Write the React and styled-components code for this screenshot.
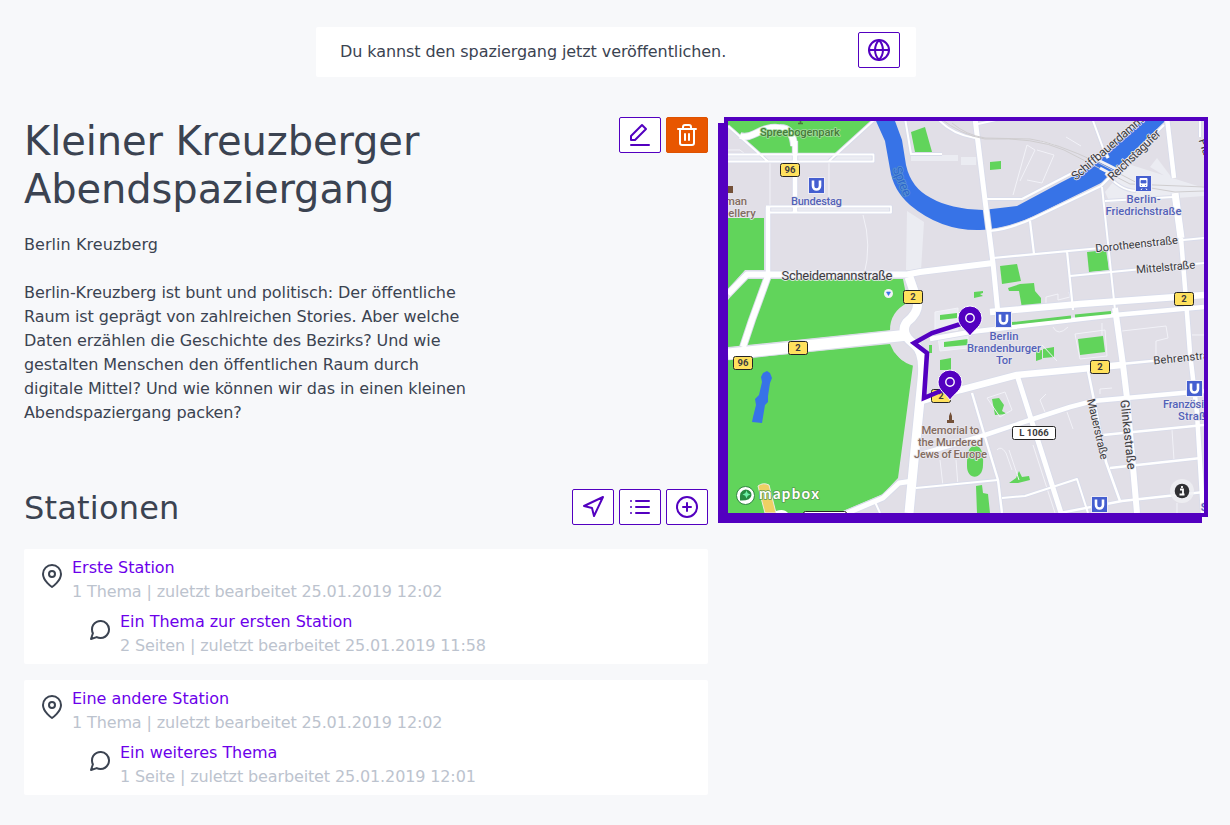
import React from "react";
import styled, { createGlobalStyle } from "styled-components";

const purple = "#5300c0";

const GlobalStyle = createGlobalStyle`
  *, *::before, *::after { box-sizing: border-box; }
  body {
    margin: 0;
    background: #f7f8fa;
    color: #3b4351;
    font-family: "DejaVu Sans", sans-serif;
    font-size: 16px;
    line-height: 24px;
  }
  h1, h2, p, ul { margin: 0; padding: 0; font-weight: 400; }
  ul { list-style: none; }
`;

const Page = styled.main`
  width: 1184px;
  margin-left: 24px;
  padding-top: 27px;
`;

const Notice = styled.section`
  display: flex;
  align-items: flex-start;
  justify-content: space-between;
  width: 600px;
  height: 50px;
  margin: 0 auto 40px;
  padding: 5px 16px 0 24px;
  background: #fff;
  border-radius: 2px;
`;

const NoticeText = styled.p`
  padding-top: 8px;
  letter-spacing: -0.085px;
`;

const Columns = styled.div`
  display: grid;
  grid-template-columns: 684px 484px;
  gap: 16px;
  align-items: start;
`;

const Header = styled.header`
  display: flex;
  justify-content: space-between;
  align-items: flex-start;
  margin-bottom: ${(p) => p.$gap}px;
`;

const Title = styled.h1`
  width: 480px;
  font-size: 40px;
  line-height: 48px;
  letter-spacing: -0.1px;
`;

const Subtitle = styled.h2`
  font-size: 32px;
  line-height: 38px;
  letter-spacing: 0.2px;
`;

const Place = styled.p`
  letter-spacing: 0.06px;
`;

const Description = styled.p`
  width: 448px;
  margin-top: 24px;
  margin-bottom: 64px;
  letter-spacing: -0.085px;
`;

const Actions = styled.div`
  display: flex;
  gap: 5px;
`;

const Button = styled.button`
  width: 42px;
  height: 36px;
  padding: 4px 8px;
  border: 1px solid ${(p) => (p.$danger ? "#de5200" : purple)};
  border-radius: 2px;
  background: ${(p) => (p.$danger ? "#e85600" : "#fff")};
  color: ${(p) => (p.$danger ? "#fff" : purple)};
`;

const Glyph = styled.svg`
  display: block;
  flex: none;
  width: 24px;
  height: 24px;
  fill: none;
  stroke: currentColor;
  stroke-width: 2;
  stroke-linecap: round;
  stroke-linejoin: round;
`;

const Stations = styled.ul`
  display: grid;
  gap: 16px;
`;

const Card = styled.li`
  height: 115px;
  padding: 7px 16px 6px;
  background: #fff;
  border-radius: 2px;
`;

const Entry = styled.div`
  display: flex;
  gap: 8px;
  height: 48px;
  margin-left: ${(p) => (p.$nested ? 48 : 0)}px;
  margin-top: ${(p) => (p.$nested ? 6 : 0)}px;

  ${Glyph} { margin-top: 8px; }
`;

const EntryLink = styled.a`
  display: block;
  color: #6c00ea;
  letter-spacing: -0.03px;
`;

const Meta = styled.span`
  color: #bcc3ce;
  letter-spacing: -0.125px;
`;

const MapFrame = styled.div`
  width: 484px;
  height: 399.7px;
  border: 4px solid ${purple};
  box-shadow: -6px 6px 0 ${purple};
`;

const MapCanvas = styled.svg`
  display: block;
  width: 476px;
  height: 392px;
  background: #e1dfe7;
  font-family: Roboto, sans-serif;
`;

const Label = styled.text`
  font-size: ${(p) => p.$size || 11.3}px;
  font-weight: ${(p) => p.$weight || 500};
  fill: ${(p) => p.$color || "#3c3c40"};
  stroke: ${(p) => p.$halo || "#e9e7ee"};
  stroke-width: 1.6px;
  stroke-linejoin: round;
  paint-order: stroke;
  text-anchor: middle;
`;

const Wordmark = styled(Label)`
  font-family: Lato, sans-serif;
`;

const Road = styled.path`
  fill: none;
  stroke: ${(p) => p.$color || "#fff"};
  stroke-width: ${(p) => p.$w}px;
  stroke-linejoin: round;
`;

const icons = {
  globe: (
    <>
      <circle cx="12" cy="12" r="10" />
      <path d="M2 12h20M12 2a15.3 15.3 0 0 1 4 10 15.3 15.3 0 0 1-4 10 15.3 15.3 0 0 1-4-10 15.3 15.3 0 0 1 4-10z" />
    </>
  ),
  edit: <path d="M14 2L18 6 7 17 3 17 3 13zM3 22h18" />,
  trash: (
    <path d="M3 6h18M19 6v14a2 2 0 0 1-2 2H7a2 2 0 0 1-2-2V6m3 0V4a2 2 0 0 1 2-2h4a2 2 0 0 1 2 2v2M10 11v6M14 11v6" />
  ),
  navigation: <path d="M3 11L22 2 13 21 11 13z" />,
  list: <path d="M8 6h13M8 12h13M8 18h13M3 6h.01M3 12h.01M3 18h.01" />,
  plus: (
    <>
      <circle cx="12" cy="12" r="10" />
      <path d="M12 8v8M8 12h8" />
    </>
  ),
  pin: (
    <>
      <path d="M21 10c0 7-9 13-9 13s-9-6-9-13a9 9 0 0 1 18 0z" />
      <circle cx="12" cy="10" r="3" />
    </>
  ),
  message: (
    <path d="M21 11.5a8.38 8.38 0 0 1-.9 3.8 8.5 8.5 0 0 1-7.6 4.7 8.38 8.38 0 0 1-3.8-.9L3 21l1.9-5.7a8.38 8.38 0 0 1-.9-3.8 8.5 8.5 0 0 1 4.7-7.6 8.38 8.38 0 0 1 3.8-.9h.5a8.48 8.48 0 0 1 8 8v.5z" />
  ),
};

const Icon = ({ name }) => <Glyph viewBox="0 0 24 24">{icons[name]}</Glyph>;

const IconButton = ({ icon, label, danger }) => (
  <Button type="button" aria-label={label} $danger={danger}>
    <Icon name={icon} />
  </Button>
);

const stations = [
  {
    title: "Erste Station",
    meta: "1 Thema | zuletzt bearbeitet 25.01.2019 12:02",
    topic: "Ein Thema zur ersten Station",
    topicMeta: "2 Seiten | zuletzt bearbeitet 25.01.2019 11:58",
  },
  {
    title: "Eine andere Station",
    meta: "1 Thema | zuletzt bearbeitet 25.01.2019 12:02",
    topic: "Ein weiteres Thema",
    topicMeta: "1 Seite | zuletzt bearbeitet 25.01.2019 12:01",
  },
];

const StationEntry = ({ icon, title, meta, nested }) => (
  <Entry $nested={nested}>
    <Icon name={icon} />
    <div>
      <EntryLink>{title}</EntryLink>
      <Meta>{meta}</Meta>
    </div>
  </Entry>
);

const parks = [
  "M728 121H874L837 154H761L745 139L728 126Z",
  "M728 218H764V270H745L728 289Z",
  "M728 300L746 279H903L908 305L897 313L891 330L728 347Z",
  "M728 360L890 344L894 352L902 360L913 365L898 478L883 494L843 511V513H728Z",
  "M911 132L925 127L932 152L915 152Z",
  "M990 162L1001 161V169L990 170Z",
  "M1000 266L1017 264L1021 281L1002 284Z",
  "M1008 288L1020 284L1034 283L1035 291L1041 298V305L1022 308L1019 291L1009 291Z",
  "M974 292L983 291V293L980 294L983 296L974 298Z",
  "M1087 252L1106 250L1109 270L1089 272Z",
  "M1078 339L1103 336L1105 352L1080 355Z",
  "M1036 351L1042 350V359L1036 361ZM1043 349L1054 347V357L1043 358Z",
  "M940 315L957 313V318L940 320ZM944 342L968 339V345L944 347Z",
  "M940 360L951 358V370H940ZM929 345H932V353H929Z",
  "M992 399L999 398L1004 405L1002 411L1007 414L995 415Z",
  "M975 446C981 445 984 454 983 465C983 480 967 481 967 466C967 454 968 446 975 446Z",
  "M1009 483L1016 478L1019 471L1022 477L1029 476L1030 480L1018 483Z",
  "M976 486L982 485L983 493L988 494L990 513H977Z",
];

const faint = [
  "M770 160V208M829 160V210M863 215Q872 245 864 275M728 150H740L745 154",
  "M1013 195L1027 145L1035 150L1020 181M1037 150L1054 155L1042 183L1027 180M1040 141L1055 145M1066 137L1081 146",
  "M1046 305V297L1058 294V300L1070 297L1069 292",
  "M1053 327Q1058 337 1068 327M1122 331L1166 326L1168 338L1156 341V356M1192 335H1204",
  "M1075 334L1105 330L1107 356L1080 359ZM1042 345L1057 361M1102 323V335",
  "M987 398L1005 392L1012 410L1000 417ZM1046 394L1040 400L1045 412M1067 412L1073 429M1100 389L1112 388M1100 389V394",
  "M997 450Q1001 445 1006 453L1012 470M1009 450L1019 480M940 460L943 486M956 460L958 486M1172 430L1174 460M1177 503V513",
  "M935 312L958 308V330L935 333ZM938 337L968 334V348L940 351Z",
  "M1033 445L1055 513M1038 445L1059 513",
];

const roads = [
  [1.8, "M728 154.500H873.500V161.500H768L728 126M768 161.500H728"],
  [2, "M829 161L873 121L879 117"],
  [6, "M740 136C753 140 761 125 780 128Q793 128 794 146"],
  [4.5, "M795 141V212"],
  [4.5, "M768 207V275"],
  [1.8, "M766 206.500H891V212.500H769"],
  [6, "M728 294L747 274.500H907L920 272L993 263"],
  [6, "M768 276L752 320L743 347"],
  [11, "M728 354L908 335"],
  [9, "M909 277L917 300Q920 312 907 322Q899 333 914 344Q925 352 922 380L920 400L915 450L909 513"],
  [5, "M975 118L985 200L993 263L999 324"],
  [2, "M905 118L911 154H942M937 118Q951 134 975 138"],
  [2, "M978 124L1005 118M987 199H1022L1078 170L1108 151"],
  [2.2, "M990 231Q1010 229 1034 218L1101 186L1118 169L1164 125"],
  [2, "M1092 118L1103 148L1108 158M1102 187L1108 243L1115 310M1105 201L1173 197M1106 173Q1119 190 1136 191"],
  [4.5, "M1167 118L1174 178"],
  [7, "M1175 193L1181 238"],
  [4.5, "M1181 238L1186 300L1190 353L1197 413L1203 513"],
  [2.2, "M993 258L1090 249L1204 238M1030 221L1034 254M1067 251L1073 310M1070 276L1204 263"],
  [6.5, "M990 312L1080 304L1204 295"],
  [4.5, "M930 339L970 332L1115 315L1204 307"],
  [6.5, "M922 401L960 390L1017 375L1070 370L1121 365"],
  [2.5, "M1121 364L1204 356M1088 371L1095 405L1106 462L1120 501"],
  [6, "M1115 308L1123 365L1127 398L1137 513"],
  [4.5, "M918 455L985 435L1030 420L1070 407L1093 401L1204 391"],
  [5, "M1017 375L1039 444L1061 513"],
  [2.4, "M972 393L985 437L998 480L1002 513"],
  [2, "M916 488L998 480M1002 498L1025 496L1077 479L1088 513"],
  [2.4, "M1060 513L1122 501L1204 492M1103 435L1204 425M1110 468L1201 458"],
  [5, "M845 514L883 498L899 483L913 481"],
  [2, "M875 502L880 513M1200 121V137"],
];

const Shield = ({ x, y, text, white, w = 20 }) => (
  <g>
    <rect x={x - w / 2 + 0.5} y={y - 6.5} width={w - 1} height="13" rx="2" fill={white ? "#fff" : "#ffe15d"} stroke="#242424" />
    <Label x={x} y={y + 3.4} $size={9.5} $weight={700} $halo="transparent">{text}</Label>
  </g>
);

const Subway = ({ x, y }) => (
  <g>
    <rect x={x - 8} y={y - 8} width="16" height="16" fill="#455fd0" stroke="#eeedf5" />
    <path d={`M${x - 3.5} ${y - 5}v5.500a3.500 3.500 0 0 0 7 0v-5.500`} fill="none" stroke="#fff" strokeWidth="2.6" />
  </g>
);

const Marker = ({ x, y }) => (
  <g>
    <path
      d={`M${x} ${y + 18}C${x - 4} ${y + 12} ${x - 12} ${y + 8} ${x - 12} ${y}a12 12 0 0 1 24 0C${x + 12} ${y + 8} ${x + 4} ${y + 12} ${x} ${y + 18}Z`}
      fill={purple}
      stroke="#fff"
    />
    <circle cx={x} cy={y} r="4.2" fill="none" stroke="#fff" strokeWidth="1.4" />
  </g>
);

const blueText = "#5362b8";
const brownText = "#836c60";

const WalkMap = () => (
  <MapCanvas viewBox="728 121 476 392">
    <g fill="#ebecf2">
      <path d="M728 154H874V162H728ZM766 207H892V213H766ZM907 211L924 222L921 270H906ZM961 157H976V165H961ZM1105 192L1128 164L1204 188V196L1110 203ZM1150 167L1157 158L1175 182ZM911 155H958V161H911Z" />
      <path d="M916 318L924 316V334L912 335ZM935 312L958 308V330L935 333ZM938 337L968 334V348L940 351Z" />
    </g>
    {parks.map((d) => <path key={d} d={d} fill="#61d45b" />)}
    <path d="M907 303Q890 312 890 330L891 343Q896 361 914 366L925 352V303Z" fill="#e1dfe7" />
    <Road $w={1} $color="#f2f2f8" d={faint.join("")} />
    <path d="M876 121H895L902 140L906 165Q911 188 931 198Q950 209 983 210L1017 206L1060 183L1093 166L1110 148L1142 121H1165L1127 160L1103 182L1034 216Q1007 229 980 230Q941 231 910 205Q893 190 890 169L885 141Z" fill="#3773e7" />
    <path d="M763 373L767 371L770 373L772 378L770 383L768 396L768 402L765 405L762 423L752 422L753 417L756 405L755 399L759 395L762 382L761 377Z" fill="#3773e7" />
    <path d="M758 486Q763 482 769 485L776 513H765Z" fill="#efd064" stroke="#eeeade" />
    <path d="M776 511Q784 508 788 513H776Z" fill="#fff" />
    {roads.map(([w, d]) => <Road key={d} $w={w + 1.8} $color="#d9dcea" d={d} />)}
    {roads.map(([w, d]) => <Road key={d} $w={w} d={d} />)}
    <Road $w={2.8} $color="#60d15d" d="M1012 323.500L1071 317M1075 316L1111 312.500" />
    <Road $w={1} $color="#cfcdcf" d="M952 123Q966 135 985 138L1030 139Q1054 142 1099 163L1145 187L1175 192L1204 191M940 118Q961 135 985 139Q1035 137 1064 150L1130 184L1204 187" />
    <Road $w={3} $color="#f1f1f5" d="M1098 160L1122 172M1100 168L1117 177" />

    <Label x="800" y="136" $color="#477c39" $halo="#a5dda0" textLength="80">Spreebogenpark</Label>
    <path d="M798 123.500h5M800.500 121v3" stroke="#477c39" strokeWidth="1.600" />
    <Label x="816.500" y="205" $color={blueText} textLength="51">Bundestag</Label>
    <Label x="736" y="205" $color={brownText}>man</Label>
    <Label x="742" y="217" $color={brownText}>ellery</Label>
    <path d="M727 186h6v7h-6" fill="#745139" />
    <Label x="0" y="0" $size={13} $weight={400} $color="#2c67cf" $halo="#5b93cf" transform="translate(898 183) rotate(68)" textLength="31">Spree</Label>
    <Label x="837" y="280" $size={13} $weight={400} textLength="111">Scheidemannstraße</Label>
    <Label x="0" y="0" $size={12} $weight={400} transform="translate(1110 151) rotate(-41)" textLength="91">Schiffbauerdamm</Label>
    <Label x="0" y="0" $size={12} $weight={400} transform="translate(1137 158) rotate(-44)" textLength="68">Reichstagufer</Label>
    <Label x="0" y="0" $size={12} $weight={400} transform="translate(1204 157) rotate(72)">Planck</Label>
    <Label x="1143.500" y="203" $color={blueText} textLength="34">Berlin-</Label>
    <Label x="1143.500" y="215" $color={blueText} textLength="76">Friedrichstraße</Label>
    <Label x="0" y="0" $weight={400} transform="translate(1137 248) rotate(-6)" textLength="83">Dorotheenstraße</Label>
    <Label x="0" y="0" $weight={400} transform="translate(1166 271) rotate(-5)" textLength="59">Mittelstraße</Label>
    <Label x="1004" y="339.500" $color={blueText} textLength="29">Berlin</Label>
    <Label x="1004" y="351.500" $color={blueText} textLength="74">Brandenburger</Label>
    <Label x="1004" y="363.500" $color={blueText} textLength="16">Tor</Label>
    <Label x="0" y="0" $weight={400} transform="translate(1188 361) rotate(-6)" textLength="69">Behrenstraße</Label>
    <Label x="0" y="0" $weight={400} transform="translate(1094 430) rotate(77)" textLength="62">Mauerstraße</Label>
    <Label x="0" y="0" $size={12.5} $weight={400} transform="translate(1124 435) rotate(84)" textLength="70">Glinkastraße</Label>
    <Label x="1195" y="408" $color={blueText} textLength="64">Französische</Label>
    <Label x="1195" y="420" $color={blueText} textLength="34">Straße</Label>
    <Label x="1206" y="511" $color={blueText}>St</Label>
    <path d="M947 423h7v-3h-2v-4l-1.500-4-1.500 4v4h-2z" fill="#745139" />
    <Label x="950.500" y="434" $color={brownText} textLength="58">Memorial to</Label>
    <Label x="950.500" y="446" $color={brownText} textLength="65">the Murdered</Label>
    <Label x="950.500" y="458" $color={brownText} textLength="73">Jews of Europe</Label>

    <Subway x={816.5} y={185.5} />
    <Subway x={1003.5} y={319.5} />
    <Subway x={1194.5} y={388.5} />
    <Subway x={1099.5} y={504.5} />
    <rect x="1135.500" y="175.500" width="16" height="16" fill="#455fd0" stroke="#eeedf5" />
    <path d="M1140 178.500h7v8h-7zM1141 190l1-1.500m4 0l1 1.500" fill="#fff" stroke="#fff" />
    <path d="M1141 180.500h5v2.500h-5zM1141 185.500h1M1145 185.500h1" fill="#455fd0" stroke="#455fd0" strokeWidth=".8" />
    <circle cx="888.500" cy="293.500" r="4.500" fill="#f2f2f6" />
    <path d="M886.500 292h4l-2 3.500z" fill="#3773e7" stroke="#3773e7" strokeWidth=".6" />

    <Shield x={790} y={170} text="96" />
    <Shield x={913} y={297} text="2" />
    <Shield x={798} y={348} text="2" />
    <Shield x={743} y={363} text="96" />
    <Shield x={941} y={396} text="2" />
    <Shield x={1100} y={367} text="2" />
    <Shield x={1184} y={299} text="2" />
    <Shield x={1034} y={433} text="L 1066" white w={44} />
    <rect x="803.500" y="511.500" width="43" height="8" rx="2" fill="#fff" stroke="#242424" />

    <path d="M970 321L932 333L914 343L927 353L924 398L950 387" fill="none" stroke={purple} strokeWidth="4.600" />
    <Marker x={950} y={382} />
    <Marker x={970} y={318} />

    <circle cx="745.500" cy="495.500" r="9" fill="#fff" stroke="#338544" />
    <path d="M740 500.500Q739 490 745.500 489.500Q751.500 490 751.500 495Q751 501 740 500.500Z" fill="#278c42" />
    <path d="M746.500 490.500l1.200 2.800 2.800 1.200-2.800 1.200-1.200 2.800-1.200-2.800-2.800-1.200 2.800-1.200z" fill="#6ff0a8" />
    <Wordmark x="789" y="499" $size={15} $weight={700} $color="#fff" $halo="#579c50" textLength="60">mapbox</Wordmark>
    <circle cx="1182" cy="491" r="12" fill="#f0f0f4" opacity=".8" />
    <circle cx="1182" cy="491" r="7.300" fill="#303033" />
    <path d="M1180 489.500h3v5M1179.500 494.500h5M1182 486v2" fill="none" stroke="#fff" strokeWidth="1.800" />
  </MapCanvas>
);

export default function App() {
  return (
    <>
      <GlobalStyle />
      <Page>
        <Notice>
          <NoticeText>Du kannst den spaziergang jetzt veröffentlichen.</NoticeText>
          <IconButton icon="globe" label="Veröffentlichen" />
        </Notice>
        <Columns>
          <section>
            <Header $gap={20}>
              <Title>Kleiner Kreuzberger Abendspaziergang</Title>
              <Actions>
                <IconButton icon="edit" label="Bearbeiten" />
                <IconButton icon="trash" label="Löschen" danger />
              </Actions>
            </Header>
            <Place>Berlin Kreuzberg</Place>
            <Description>
              Berlin-Kreuzberg ist bunt und politisch: Der öffentliche Raum ist geprägt von
              zahlreichen Stories. Aber welche Daten erzählen die Geschichte des Bezirks? Und wie
              gestalten Menschen den öffentlichen Raum durch digitale Mittel? Und wie können wir
              das in einen kleinen Abendspaziergang packen?
            </Description>
            <Header $gap={22}>
              <Subtitle>Stationen</Subtitle>
              <Actions>
                <IconButton icon="navigation" label="Navigation" />
                <IconButton icon="list" label="Liste" />
                <IconButton icon="plus" label="Hinzufügen" />
              </Actions>
            </Header>
            <Stations>
              {stations.map((s) => (
                <Card key={s.title}>
                  <StationEntry icon="pin" title={s.title} meta={s.meta} />
                  <StationEntry icon="message" title={s.topic} meta={s.topicMeta} nested />
                </Card>
              ))}
            </Stations>
          </section>
          <MapFrame>
            <WalkMap />
          </MapFrame>
        </Columns>
      </Page>
    </>
  );
}
